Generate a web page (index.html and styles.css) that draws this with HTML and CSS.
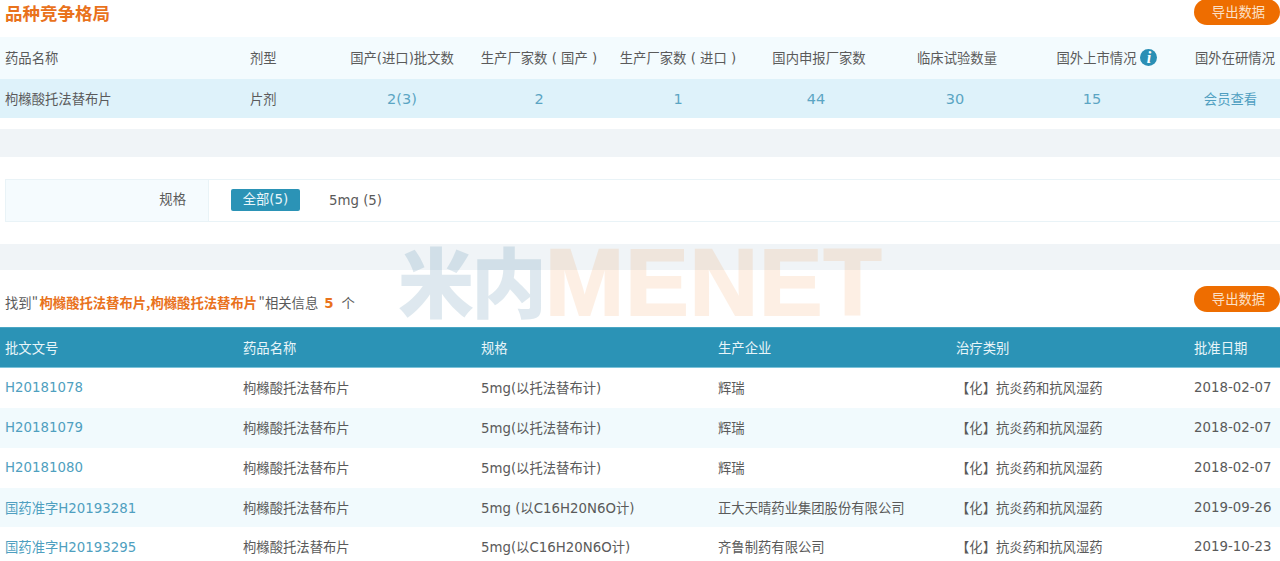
FILE: index.html
```html
<!DOCTYPE html>
<html lang="zh-CN">
<head>
<meta charset="utf-8">
<title>品种竞争格局</title>
<link rel="stylesheet" href="styles.css">
</head>
<body>
<div class="page">
  <header class="title-row">
    <h2 class="title">品种竞争格局</h2>
    <a class="export">导出数据</a>
  </header>

  <table class="summary">
    <colgroup>
      <col class="c-name"><col class="c-form"><col class="c-a"><col class="c-b"><col class="c-c"><col class="c-d"><col class="c-e"><col class="c-f"><col class="c-g">
    </colgroup>
    <thead>
      <tr>
        <th class="left">药品名称</th>
        <th class="left">剂型</th>
        <th>国产(进口)批文数</th>
        <th>生产厂家数 ( 国产 )</th>
        <th>生产厂家数 ( 进口 )</th>
        <th>国内申报厂家数</th>
        <th>临床试验数量</th>
        <th><span class="with-info">国外上市情况<i class="info">i</i></span></th>
        <th class="last">国外在研情况</th>
      </tr>
    </thead>
    <tbody>
      <tr>
        <td class="left">枸橼酸托法替布片</td>
        <td class="left">片剂</td>
        <td class="num">2(3)</td>
        <td class="num">2</td>
        <td class="num">1</td>
        <td class="num">44</td>
        <td class="num">30</td>
        <td class="num">15</td>
        <td class="last">会员查看</td>
      </tr>
    </tbody>
  </table>

  <div class="band band-one"></div>

  <div class="filter">
    <div class="filter-label">规格</div>
    <div class="filter-options">
      <span class="pill">全部(5)</span>
      <span class="option">5mg (5)</span>
    </div>
  </div>

  <div class="band band-two"></div>

  <div class="found-row">
    <p class="found">找到" <b>枸橼酸托法替布片,枸橼酸托法替布片</b> "相关信息<b class="count">5</b>个</p>
    <a class="export">导出数据</a>
  </div>

  <table class="results">
    <thead>
      <tr><th>批文文号</th><th>药品名称</th><th>规格</th><th>生产企业</th><th>治疗类别</th><th>批准日期</th></tr>
    </thead>
    <tbody>
      <tr><td class="link">H20181078</td><td>枸橼酸托法替布片</td><td>5mg(以托法替布计)</td><td>辉瑞</td><td>【化】抗炎药和抗风湿药</td><td>2018-02-07</td></tr>
      <tr><td class="link">H20181079</td><td>枸橼酸托法替布片</td><td>5mg(以托法替布计)</td><td>辉瑞</td><td>【化】抗炎药和抗风湿药</td><td>2018-02-07</td></tr>
      <tr><td class="link">H20181080</td><td>枸橼酸托法替布片</td><td>5mg(以托法替布计)</td><td>辉瑞</td><td>【化】抗炎药和抗风湿药</td><td>2018-02-07</td></tr>
      <tr><td class="link">国药准字H20193281</td><td>枸橼酸托法替布片</td><td>5mg (以C16H20N6O计)</td><td>正大天晴药业集团股份有限公司</td><td>【化】抗炎药和抗风湿药</td><td>2019-09-26</td></tr>
      <tr><td class="link">国药准字H20193295</td><td>枸橼酸托法替布片</td><td>5mg(以C16H20N6O计)</td><td>齐鲁制药有限公司</td><td>【化】抗炎药和抗风湿药</td><td>2019-10-23</td></tr>
    </tbody>
  </table>

  <div class="watermark" aria-hidden="true"><span class="wm-cn">米内</span><span class="wm-en">MENET</span></div>
</div>
</body>
</html>
```
FILE: styles.css
```css
* { box-sizing: border-box; }
html, body { margin: 0; padding: 0; background: #fff; }
body {
  font-family: "DejaVu Sans", "Noto Sans CJK SC", sans-serif;
  font-size: 13.33px;
  color: #5a5a5a;
  overflow: hidden;
}
.page { position: relative; width: 1280px; height: 561px; overflow: hidden; }

.title-row { display: flex; justify-content: space-between; align-items: flex-start; height: 37px; }
.title {
  margin: 0;
  padding-left: 5px;
  font-family: "Noto Sans CJK SC", sans-serif;
  font-size: 17.5px;
  line-height: 26px;
  font-weight: 700;
  color: #e9721c;
}
.export {
  display: block;
  width: 86px;
  height: 26px;
  padding-left: 3px;
  border-radius: 13px;
  background: #ee6d00;
  color: #fbe0c8;
  font-size: 13.33px;
  line-height: 28px;
  text-align: center;
}
.title-row .export { margin-top: -1px; }

table { border-collapse: collapse; table-layout: fixed; width: 1280px; }
th, td { padding: 0; font-weight: 400; }

.summary th { height: 42px; padding-bottom: 2px; background: #f3fbfe; text-align: center; white-space: nowrap; }
.summary td { height: 39px; background: #def2fa; text-align: center; color: #4f9fc0; }
.summary .left { text-align: left; padding-left: 5px; color: #5a5a5a; }
.summary .num { font-size: 14.5px; color: #5ba5c3; }
.summary .num:nth-child(6) { padding-right: 6px; }
.summary .num:nth-child(7) { padding-right: 4px; }
.summary .num:nth-child(8) { padding-right: 8px; }
.summary th.last { padding-left: 23px; }
.summary td.last { padding-left: 14px; white-space: nowrap; }
.c-name { width: 245px; }
.c-form { width: 88px; }
.c-a { width: 138px; }
.c-b { width: 136px; }
.c-c { width: 142px; }
.c-d { width: 140px; }
.c-e { width: 136px; }
.c-f { width: 142px; }
.c-g { width: 113px; }

.with-info { display: inline-flex; align-items: center; gap: 4px; margin-left: 22px; white-space: nowrap; }
.info {
  display: block;
  width: 17px;
  height: 17px;
  border-radius: 50%;
  background: #2a8fb5;
  color: #fff;
  font-family: "Liberation Serif", serif;
  font-size: 16px;
  font-weight: 700;
  font-style: italic;
  line-height: 17px;
  text-align: center;
}

.band { background: #f0f4f7; }
.band-one { height: 28px; margin-top: 11px; }
.band-two { height: 26px; margin-top: 22px; }

.filter {
  display: flex;
  height: 43px;
  margin: 22px 0 0 5px;
  border: 1px solid #e9f3f7;
  border-right: 0;
}
.filter-label {
  width: 203px;
  padding-right: 22px;
  background: #f5fbfe;
  border-right: 1px solid #e9f3f7;
  text-align: right;
  line-height: 40px;
}
.filter-options { display: flex; align-items: center; gap: 29px; padding: 0 0 1px 22px; }
.pill {
  width: 69px;
  height: 22px;
  border-radius: 2px;
  background: #2b93b6;
  color: #e9f6fa;
  text-align: center;
  line-height: 22px;
}

.found-row { display: flex; justify-content: space-between; align-items: flex-start; height: 57px; padding-top: 16px; }
.found { margin: 0; padding: 8px 0 0 5px; font-size: 13.33px; line-height: 18px; font-family: "Noto Sans CJK SC", sans-serif; word-spacing: -1.5px; white-space: nowrap; }
.found b { color: #e9721c; font-size: 13.33px; font-weight: 700; }
.found .count { margin: 0 8px 0 6px; font-family: "DejaVu Sans", sans-serif; }

.results th {
  height: 40px;
  background: #2b93b6;
  border-top: 1px solid #4aa6c4;
  border-bottom: 1px solid #7cc3da;
  color: #e8f5f9;
  text-align: left;
  padding-left: 5px;
}
.results th:nth-child(n), .results td:nth-child(n) { width: 238px; }
.results th:last-child, .results td:last-child { width: 90px; padding-left: 4px; }
.results th:nth-child(4), .results td:nth-child(4) { padding-left: 4px; }
.results th:nth-child(5), .results td:nth-child(5) { padding-left: 4px; }
.results td { height: 40px; padding-left: 5px; white-space: nowrap; }
.results tbody tr:nth-child(4) td { height: 39px; }
.results tbody tr:nth-child(even) td { background: #f1fafd; }
.results .link { color: #4f9fc0; }

.watermark {
  position: absolute;
  left: 398px;
  top: 230px;
  display: flex;
  align-items: center;
  height: 105px;
  pointer-events: none;
  white-space: nowrap;
}
.wm-cn {
  margin-bottom: 8px;
  font-family: "Noto Sans CJK SC", sans-serif;
  font-size: 76px;
  font-weight: 900;
  letter-spacing: -3px;
  color: #2b6e96;
  opacity: 0.15;
}
.wm-en {
  margin-left: 1px;
  font-family: "Liberation Sans", sans-serif;
  font-size: 95px;
  font-weight: 700;
  letter-spacing: 1px;
  color: #ee6d00;
  -webkit-text-stroke: 2px #ee6d00;
  opacity: 0.1;
}
```
